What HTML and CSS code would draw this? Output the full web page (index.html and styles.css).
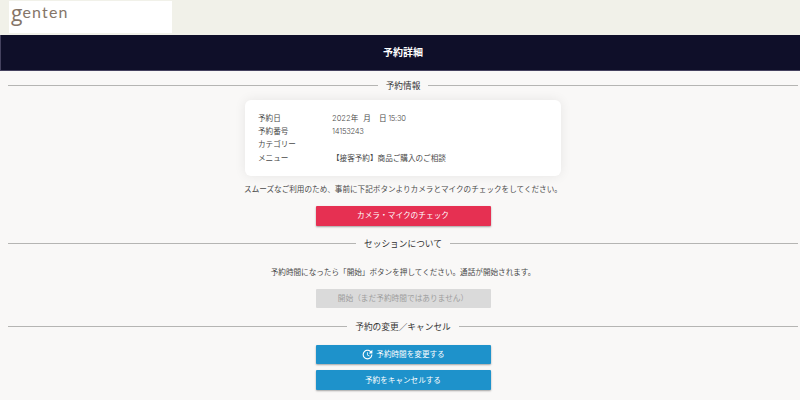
FILE: index.html
```html
<!DOCTYPE html>
<html lang="ja">
<head>
  <meta charset="UTF-8">
  <title>予約詳細</title>
  <link rel="stylesheet" href="styles.css">
</head>
<body>
  <header class="header">
    <div class="logo"><span class="logo-g">g</span><span class="logo-rest">enten</span></div>
  </header>
  <h1 class="title">予約詳細</h1>

  <main class="container">
    <h2 class="divider">予約情報</h2>
    <dl class="card">
      <dt>予約日</dt>
      <dd><span class="num">2022</span>年<span class="month">月</span><span class="day">日</span> <span class="num time">15:30</span></dd>
      <dt>予約番号</dt>
      <dd><span class="num code">14153243</span></dd>
      <dt>カテゴリー</dt>
      <dd></dd>
      <dt>メニュー</dt>
      <dd>【接客予約】商品ご購入のご相談</dd>
    </dl>
    <p class="note">スムーズなご利用のため、事前に下記ボタンよりカメラとマイクのチェックをしてください。</p>
    <button class="btn btn-check">カメラ・マイクのチェック</button>

    <h2 class="divider divider-session">セッションについて</h2>
    <p class="note note-session">予約時間になったら「開始」ボタンを押してください。通話が開始されます。</p>
    <button class="btn btn-start" disabled>開始（まだ予約時間ではありません）</button>

    <h2 class="divider divider-change">予約の変更／キャンセル</h2>
    <button class="btn btn-blue">
      <svg class="icon" viewBox="0 0 24 24">
        <path d="M21 10.12h-6.78l2.74-2.82c-2.73-2.7-7.15-2.8-9.88-.1-2.73 2.71-2.73 7.08 0 9.79s7.15 2.71 9.88 0C18.32 15.65 19 14.08 19 12.1h2c0 1.98-.88 4.55-2.64 6.29-3.51 3.48-9.21 3.48-12.72 0-3.5-3.47-3.53-9.11-.02-12.58s9.14-3.47 12.65 0L21 3v7.12zM12.5 8v4.25l3.5 2.08-.72 1.21L11 13V8h1.5z"/>
      </svg>
      予約時間を変更する
    </button>
    <button class="btn btn-blue btn-cancel">予約をキャンセルする</button>
  </main>
</body>
</html>
```

FILE: styles.css
```css
* {
  box-sizing: border-box;
}
body {
  margin: 0;
  height: 400px;
  overflow: hidden;
  background-color: #f9f8f7;
  color: #4a4a4a;
  font-family: "Noto Sans CJK JP", sans-serif;
  font-size: 7.6px;
}
.header {
  height: 35px;
  padding: 1px 0 0 9px;
  background-color: #f1f1e9;
}
.logo {
  display: flex;
  align-items: flex-start;
  width: 163px;
  height: 32px;
  padding-left: 2px;
  background-color: #fff;
  color: #857568;
}
.logo-g {
  padding-top: 1px;
  font-family: "Open Sans", sans-serif;
  font-size: 21px;
  line-height: 22px;
}
.logo-rest {
  font-family: Lato, sans-serif;
  font-size: 16px;
  line-height: 21px;
  letter-spacing: 1.2px;
}
.title {
  height: 36px;
  margin: 0;
  padding-left: 5px;
  border-left: 1px solid #45425f;
  border-bottom: 1px solid #45425f;
  background-color: #0f0f29;
  color: #fff;
  font-size: 10px;
  line-height: 34px;
  text-align: center;
}
.container {
  display: flex;
  flex-direction: column;
  align-items: center;
  padding: 7px 2px 0 8px;
}
.divider {
  display: flex;
  align-items: center;
  gap: 8px;
  width: 100%;
  height: 15px;
  margin: 0;
  color: #333;
  font-size: 8.7px;
  font-weight: 400;
  line-height: 14px;
}
.divider::before,
.divider::after {
  content: "";
  flex: 1;
  height: 1px;
  background-color: #b5b5b3;
}
.card {
  display: grid;
  grid-template-columns: 74px 1fr;
  grid-auto-rows: 13.2px;
  width: 316px;
  height: 76px;
  margin: 7px 0 0;
  padding: 11px 13px;
  border-radius: 6px;
  background-color: #fff;
  box-shadow: 0 0 12px rgba(0, 0, 0, 0.08);
  line-height: 13.2px;
}
.card dd {
  margin: 0;
  white-space: nowrap;
}
.num {
  font-family: Inter, sans-serif;
  font-weight: 300;
}
.time {
  letter-spacing: -0.3px;
}
.code {
  letter-spacing: -0.25px;
}
.month {
  margin-left: 5px;
}
.day {
  margin-left: 8px;
}
.note {
  height: 12px;
  margin: 7px 0 0;
  line-height: 12px;
  white-space: nowrap;
}
.note-session {
  margin-top: 15px;
}
.btn {
  display: flex;
  align-items: center;
  justify-content: center;
  width: 175px;
  height: 20px;
  margin: 11px 0 0;
  padding: 0 0 2px;
  border: none;
  border-radius: 1px;
  color: #fff;
  font-family: inherit;
  font-size: 7.7px;
  line-height: 18px;
  box-shadow: 0 1px 2px rgba(0, 0, 0, 0.35);
}
.btn-check {
  background-color: #e63052;
}
.btn-start {
  height: 19px;
  background-color: #dadada;
  color: #9d9d9d;
  box-shadow: none;
}
.btn-blue {
  height: 19px;
  padding-bottom: 1px;
  background-color: #1e92cb;
  font-size: 7.6px;
}
.btn-cancel {
  height: 20px;
  margin-top: 6px;
}
.divider-session {
  margin-top: 10px;
}
.divider-change {
  margin-top: 11px;
}
.icon {
  width: 13px;
  height: 13px;
  margin-top: 1px;
  margin-right: 2px;
  fill: #fff;
}
```
